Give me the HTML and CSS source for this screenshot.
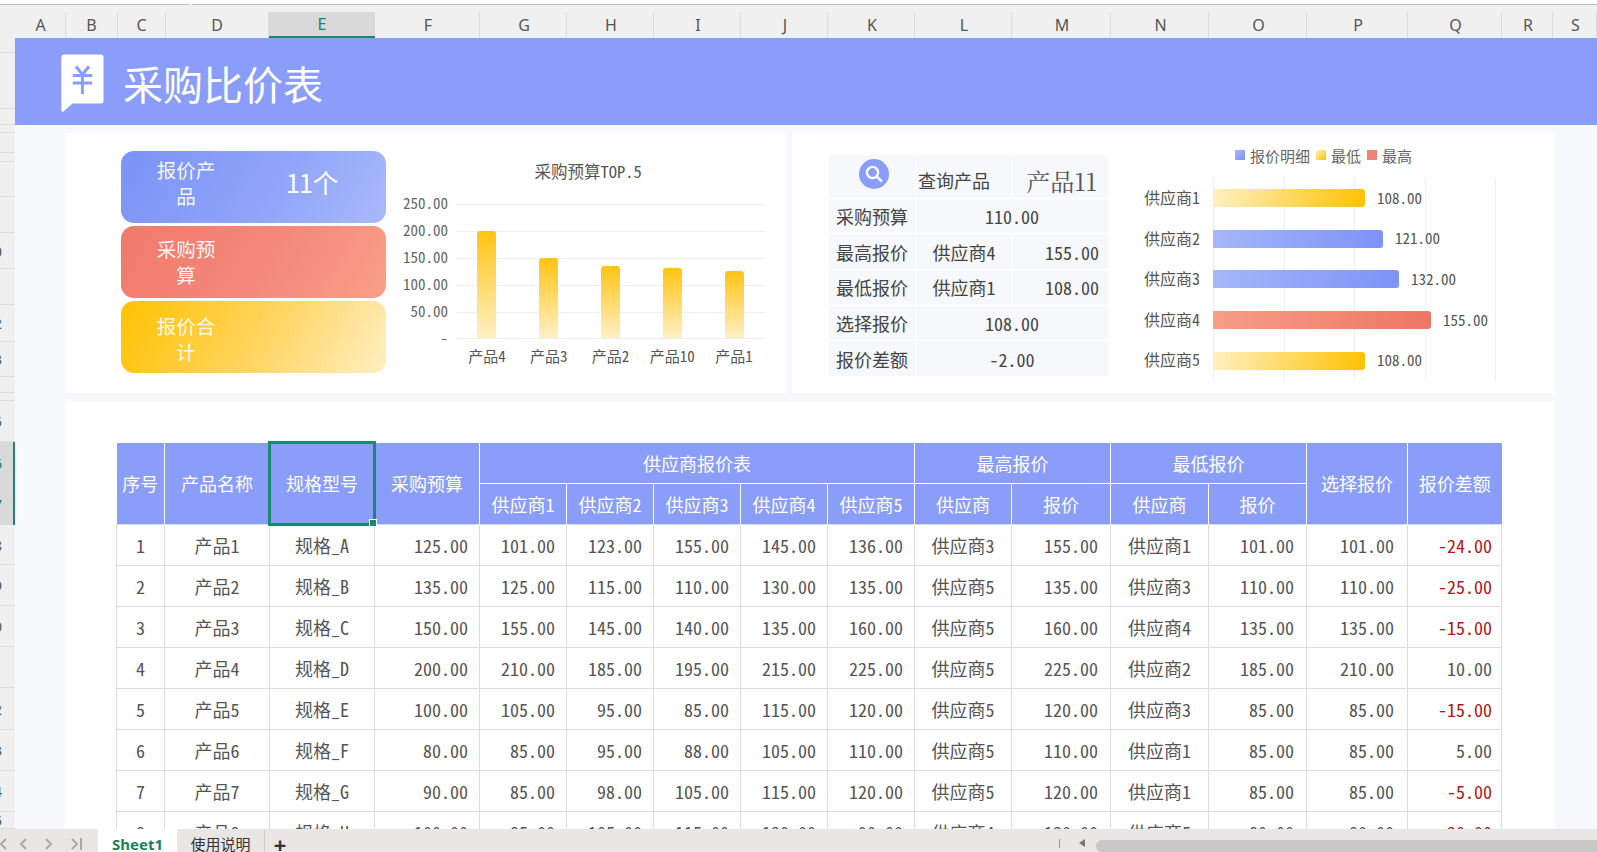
FILE: index.html
```html
<!DOCTYPE html>
<html lang="zh-CN">
<head>
<meta charset="utf-8">
<title>采购比价表</title>
<link rel="stylesheet" href="styles.css">
</head>
<body>
<div class="app">
  <div class="topstrip"></div>
  <div class="colhead">
    <span class="ch"></span><span class="ch">A</span><span class="ch">B</span><span class="ch">C</span><span class="ch">D</span><span class="ch active">E</span><span class="ch">F</span><span class="ch">G</span><span class="ch">H</span><span class="ch">I</span><span class="ch">J</span><span class="ch">K</span><span class="ch">L</span><span class="ch">M</span><span class="ch">N</span><span class="ch">O</span><span class="ch">P</span><span class="ch">Q</span><span class="ch">R</span><span class="ch">S</span>
  </div>
  <div class="body">
    <div class="rowhead">
      <div class="rh" style="height:15px"></div>
      <div class="rh" style="height:56px"></div>
      <div class="rh" style="height:16px"></div>
      <div class="rh" style="height:8px"></div>
      <div class="rh" style="height:20px"></div>
      <div class="rh" style="height:9px"></div>
      <div class="rh" style="height:35px"></div>
      <div class="rh" style="height:36px"></div>
      <div class="rh" style="height:36px"><span>0</span></div>
      <div class="rh" style="height:36px"></div>
      <div class="rh" style="height:37px"><span>2</span></div>
      <div class="rh" style="height:35px"><span>3</span></div>
      <div class="rh" style="height:16px"></div>
      <div class="rh" style="height:8px"></div>
      <div class="rh" style="height:41px"><span>5</span></div>
      <div class="rh sel" style="height:41px"><span>6</span></div>
      <div class="rh sel" style="height:42px"><span>7</span></div>
      <div class="rh" style="height:40px"><span>8</span></div>
      <div class="rh" style="height:41px"><span>9</span></div>
      <div class="rh" style="height:41px"><span>0</span></div>
      <div class="rh" style="height:41px"></div>
      <div class="rh" style="height:42px"><span>2</span></div>
      <div class="rh" style="height:41px"><span>3</span></div>
      <div class="rh" style="height:41px"><span>4</span></div>
      <div class="rh" style="height:17px"><span>5</span></div>
    </div>
    <main class="sheet">
      <header class="banner">
        <svg class="logo" viewBox="0 0 43 58" width="43" height="58" aria-hidden="true">
          <path class="logo-bubble" d="M3 0.5H40a2.5 2.5 0 0 1 2.5 2.5V47a2.5 2.5 0 0 1-2.5 2.5H11.5L2.5 57.4Q0.3 58.4 0.3 56V3A2.7 2.7 0 0 1 3 0.5Z"/>
          <path class="logo-yen" d="M15 12.5L21.4 20.5L28 12.5M11.8 21.5H31.2M11.8 29H31.2M21.4 20.5V40"/>
        </svg>
        <h1 class="title">采购比价表</h1>
      </header>
      <div class="panels">
        <section class="panel panel-left">
          <div class="kpis">
            <div class="kpi kpi-blue"><div class="kpi-label">报价产品</div><div class="kpi-value">11个</div></div>
            <div class="kpi kpi-red"><div class="kpi-label">采购预算</div><div class="kpi-value"></div></div>
            <div class="kpi kpi-yellow"><div class="kpi-label">报价合计</div><div class="kpi-value"></div></div>
          </div>
          <div class="budget">
            <div class="budget-title">采购预算TOP.5</div>
            <div class="budget-chart">
              <div class="axis">
                <span>250.00</span><span>200.00</span><span>150.00</span><span>100.00</span><span>50.00</span><span>-</span>
              </div>
              <div class="budget-main">
                <div class="plot">
                  <div class="slot"><i class="vbar" style="height:80%"></i></div>
                  <div class="slot"><i class="vbar" style="height:60%"></i></div>
                  <div class="slot"><i class="vbar" style="height:54%"></i></div>
                  <div class="slot"><i class="vbar" style="height:52%"></i></div>
                  <div class="slot"><i class="vbar" style="height:50%"></i></div>
                </div>
                <div class="xlabels"><span>产品4</span><span>产品3</span><span>产品2</span><span>产品10</span><span>产品1</span></div>
              </div>
            </div>
          </div>
        </section>
        <section class="panel panel-right">
          <table class="query">
            <tbody>
              <tr class="q-first">
                <td class="q-icon">
                  <svg viewBox="0 0 30 30" width="30" height="30" aria-hidden="true">
                    <circle class="icon-disc" cx="15" cy="15" r="15"/>
                    <circle class="icon-lens" cx="13.5" cy="13.5" r="5.6"/>
                    <path class="icon-handle" d="M18 18L23 22.5"/>
                  </svg>
                </td>
                <td class="q-bottom q-name">查询产品</td>
                <td class="q-bottom q-product">产品11</td>
              </tr>
              <tr><td>采购预算</td><td colspan="2" class="n">110.00</td></tr>
              <tr><td>最高报价</td><td>供应商4</td><td class="n r">155.00</td></tr>
              <tr><td>最低报价</td><td>供应商1</td><td class="n r">108.00</td></tr>
              <tr><td>选择报价</td><td colspan="2" class="n">108.00</td></tr>
              <tr><td>报价差额</td><td colspan="2" class="n">-2.00</td></tr>
            </tbody>
          </table>
          <div class="supplier">
            <div class="legend">
              <i class="sq sq-blue"></i><span>报价明细</span>
              <i class="sq sq-yellow"></i><span>最低</span>
              <i class="sq sq-red"></i><span>最高</span>
            </div>
            <div class="supplier-chart">
              <div class="cats"><span>供应商1</span><span>供应商2</span><span>供应商3</span><span>供应商4</span><span>供应商5</span></div>
              <div class="hplot">
                <div class="hrow"><i class="hbar hb-yellow" style="width:152px"></i><span>108.00</span></div>
                <div class="hrow"><i class="hbar hb-blue" style="width:170px"></i><span>121.00</span></div>
                <div class="hrow"><i class="hbar hb-blue" style="width:186px"></i><span>132.00</span></div>
                <div class="hrow"><i class="hbar hb-red" style="width:218px"></i><span>155.00</span></div>
                <div class="hrow"><i class="hbar hb-yellow" style="width:152px"></i><span>108.00</span></div>
              </div>
            </div>
          </div>
        </section>
      </div>
      <section class="panel panel-table">
        <table class="data">
          <colgroup>
            <col class="w48"><col class="w105"><col class="w105"><col class="w105"><col class="w87"><col class="w87"><col class="w87"><col class="w87"><col class="w87"><col class="w97"><col class="w99"><col class="w98"><col class="w98"><col class="w101"><col class="w94">
          </colgroup>
          <thead>
            <tr>
              <th rowspan="2">序号</th><th rowspan="2">产品名称</th>
              <th rowspan="2" class="selected">规格型号<i class="sel-box"></i><i class="sel-handle"></i></th>
              <th rowspan="2">采购预算</th><th colspan="5">供应商报价表</th><th colspan="2">最高报价</th><th colspan="2">最低报价</th><th rowspan="2">选择报价</th><th rowspan="2">报价差额</th>
            </tr>
            <tr><th>供应商1</th><th>供应商2</th><th>供应商3</th><th>供应商4</th><th>供应商5</th><th>供应商</th><th>报价</th><th>供应商</th><th>报价</th></tr>
          </thead>
          <tbody>
            <tr><td>1</td><td>产品1</td><td>规格_A</td><td class="n r">125.00</td><td class="n r">101.00</td><td class="n r">123.00</td><td class="n r">155.00</td><td class="n r">145.00</td><td class="n r">136.00</td><td>供应商3</td><td class="n r">155.00</td><td>供应商1</td><td class="n r">101.00</td><td class="n r">101.00</td><td class="n r neg">-24.00</td></tr>
            <tr><td>2</td><td>产品2</td><td>规格_B</td><td class="n r">135.00</td><td class="n r">125.00</td><td class="n r">115.00</td><td class="n r">110.00</td><td class="n r">130.00</td><td class="n r">135.00</td><td>供应商5</td><td class="n r">135.00</td><td>供应商3</td><td class="n r">110.00</td><td class="n r">110.00</td><td class="n r neg">-25.00</td></tr>
            <tr><td>3</td><td>产品3</td><td>规格_C</td><td class="n r">150.00</td><td class="n r">155.00</td><td class="n r">145.00</td><td class="n r">140.00</td><td class="n r">135.00</td><td class="n r">160.00</td><td>供应商5</td><td class="n r">160.00</td><td>供应商4</td><td class="n r">135.00</td><td class="n r">135.00</td><td class="n r neg">-15.00</td></tr>
            <tr><td>4</td><td>产品4</td><td>规格_D</td><td class="n r">200.00</td><td class="n r">210.00</td><td class="n r">185.00</td><td class="n r">195.00</td><td class="n r">215.00</td><td class="n r">225.00</td><td>供应商5</td><td class="n r">225.00</td><td>供应商2</td><td class="n r">185.00</td><td class="n r">210.00</td><td class="n r">10.00</td></tr>
            <tr><td>5</td><td>产品5</td><td>规格_E</td><td class="n r">100.00</td><td class="n r">105.00</td><td class="n r">95.00</td><td class="n r">85.00</td><td class="n r">115.00</td><td class="n r">120.00</td><td>供应商5</td><td class="n r">120.00</td><td>供应商3</td><td class="n r">85.00</td><td class="n r">85.00</td><td class="n r neg">-15.00</td></tr>
            <tr><td>6</td><td>产品6</td><td>规格_F</td><td class="n r">80.00</td><td class="n r">85.00</td><td class="n r">95.00</td><td class="n r">88.00</td><td class="n r">105.00</td><td class="n r">110.00</td><td>供应商5</td><td class="n r">110.00</td><td>供应商1</td><td class="n r">85.00</td><td class="n r">85.00</td><td class="n r">5.00</td></tr>
            <tr><td>7</td><td>产品7</td><td>规格_G</td><td class="n r">90.00</td><td class="n r">85.00</td><td class="n r">98.00</td><td class="n r">105.00</td><td class="n r">115.00</td><td class="n r">120.00</td><td>供应商5</td><td class="n r">120.00</td><td>供应商1</td><td class="n r">85.00</td><td class="n r">85.00</td><td class="n r neg">-5.00</td></tr>
            <tr><td>8</td><td>产品8</td><td>规格_H</td><td class="n r">100.00</td><td class="n r">85.00</td><td class="n r">105.00</td><td class="n r">115.00</td><td class="n r">130.00</td><td class="n r">90.00</td><td>供应商4</td><td class="n r">130.00</td><td>供应商5</td><td class="n r">80.00</td><td class="n r">80.00</td><td class="n r neg">-20.00</td></tr>
          </tbody>
        </table>
      </section>
    </main>
  </div>
  <footer class="tabbar">
    <div class="navs">
      <svg viewBox="0 0 90 16" width="90" height="16" aria-hidden="true">
        <path d="M6 3L1 8L6 13M26 3L21 8L26 13M46 3L51 8L46 13M72 3L77 8L72 13M81 2V14"/>
      </svg>
    </div>
    <div class="tab tab-active">Sheet1</div>
    <div class="tab tab-plain">使用说明</div>
    <div class="tab-add">+</div>
    <div class="scroll">
      <i class="scroll-sep"></i>
      <i class="scroll-arrow"></i>
      <i class="scroll-thumb"></i>
    </div>
  </footer>
</div>
</body>
</html>
```

FILE: styles.css
```css
* { box-sizing: border-box; }
html, body { margin: 0; height: 100%; overflow: hidden; }
body {
  font-family: "Noto Sans Mono CJK SC", "Noto Sans CJK SC", "Liberation Mono", monospace;
  color: #555;
  background: #f0f0f0;
}
.app { width: 1597px; height: 852px; display: flex; flex-direction: column; position: relative; overflow: hidden; }

/* top chrome */
.topstrip { height: 12px; flex: none; background: #f0f0f0; position: relative; }
.topstrip::before { content: ""; display: block; height: 4px; background: #fff; border-bottom: 1px solid #bdbdbd; }
.topstrip::after {
  content: ""; position: absolute; left: 187px; top: -3px; width: 7px; height: 7px;
  background: #fff; transform: rotate(45deg); border: 0;
}
.colhead {
  height: 26px; flex: none; display: grid; background: #f0f0f0;
  grid-template-rows: 26px;
  grid-template-columns: 16px 50px 52px 48px 103px 106px 105px 87px 87px 87px 87px 87px 97px 99px 98px 98px 101px 94px 51px 44px;
}
.ch {
  display: flex; align-items: center; justify-content: center;
  font: 16px/20px "Noto Sans", sans-serif; color: #555;
  border-right: 1px solid #dcdcdc;
}
.ch:first-child { border-right: 0; }
.ch:nth-child(n+7) { padding-left: 2px; }
.ch.active { background: #d9d9d9; color: #1a7f64; border-bottom: 2px solid #1a8a6c; border-right: 0; }

/* body */
.body { flex: 1; min-height: 0; display: flex; }
.rowhead { width: 15px; flex: none; background: #f0f0f0; overflow: hidden; }
.rh {
  display: flex; justify-content: flex-end; align-items: center; padding-right: 13px;
  border-bottom: 1px solid #dcdcdc; font: 15px "Noto Sans", sans-serif; color: #555;
}
.rh span { flex: none; }
.rh.sel { background: #d9d9d9; border-right: 2px solid #1a8a6c; padding-right: 11px; color: #1a7f64; border-bottom: 0; }

.sheet { flex: 1; min-width: 0; background: #f7f9fd; overflow: hidden; }
.banner { height: 87px; background: #8a9df9; display: flex; align-items: center; padding-left: 46px; gap: 19px; }
.logo { display: block; margin-top: 3px; }
.logo-bubble { fill: #fff; }
.logo-yen { fill: none; stroke: #8a9df9; stroke-width: 3; }
.title { margin: 2px 0 0; font-size: 40px; font-weight: 400; color: #fff; line-height: 48px; }

.panels { display: flex; gap: 6px; margin: 8px 42px 0 50px; height: 260px; }
.panel { background: #fff; }
.panel-left { width: 721px; display: flex; padding: 18px 0 0 56px; }
.panel-right { flex: 1; display: flex; padding: 12px 0 0 36px; }

/* KPIs */
.kpis { width: 265px; flex: none; display: flex; flex-direction: column; gap: 3px; }
.kpi { height: 72px; border-radius: 13px; display: flex; align-items: center; color: #fff; }
.kpi-blue { background: linear-gradient(120deg, #7b93f6, #8fa4f9 55%, #a9b9fb); }
.kpi-red { background: linear-gradient(120deg, #f07a6b, #f4897a 55%, #f99f87); }
.kpi-yellow { background: linear-gradient(120deg, #ffc200, #ffd564 55%, #fff0c4); }
.kpi-label { width: 66px; margin-left: 32px; font-size: 19.5px; line-height: 26.5px; text-align: center; color: #fff; opacity: .92; }
.kpi-blue .kpi-label { margin-top: -8px; }
.kpi-yellow .kpi-label { margin-top: 4px; }
.kpi-value { flex: 1; padding-left: 20px; margin-top: -10px; text-align: center; font-size: 26px; line-height: 30px; }

/* budget chart */
.budget { width: 370px; flex: none; margin-left: 17px; padding-top: 10px; }
.budget-title { height: 20px; line-height: 20px; text-align: center; font-size: 16.5px; margin-bottom: 23px; }
.budget-chart { display: flex; gap: 10px; }
.axis {
  width: 43px; flex: none; margin-top: -15px; align-self: flex-start; display: grid; grid-auto-rows: 27px; align-items: center;
  text-align: right; font-size: 15px; color: #666; white-space: nowrap;
}
.budget-main { width: 309px; flex: none; }
.plot {
  height: 135px; display: flex; align-items: flex-end;
  background: repeating-linear-gradient(to bottom, #efefef 0 1px, transparent 1px 27px);
  border-bottom: 1px solid #efefef;
}
.slot { flex: 1; height: 100%; display: flex; justify-content: center; align-items: flex-end; }
.vbar { display: block; width: 19px; border-radius: 3px 3px 0 0; background: linear-gradient(to bottom, #ffc412, #fff0c6); }
.xlabels { display: flex; margin-top: 7px; }
.xlabels span { flex: 1; text-align: center; font-size: 15px; line-height: 20px; }

/* query table */
.query { width: 281px; height: 223px; margin-top: 9px; flex: none; border-collapse: collapse; table-layout: fixed; background: #f6f8fc; color: #444; }
.query td { border: 1px solid #fff; padding: 0; text-align: center; font-size: 18px; height: 35px; line-height: 24px; }
.query td:first-child { width: 87px; }
.query td:nth-child(2) { width: 97px; }
.q-first td { height: 43px; }
.query td.q-bottom { vertical-align: bottom; padding-bottom: 6px; }
.query td.q-name { text-align: left; padding-left: 2px; }
.query td.q-product { font-family: "Noto Serif CJK SC", "Liberation Serif", "Noto Sans CJK SC", serif; font-size: 24px; font-weight: 400; color: #555; padding-left: 2px; padding-bottom: 5px; }
.query td.q-icon { padding-left: 4px; }
.q-icon svg { display: block; margin: 0 auto 5px; }
.icon-disc { fill: #8a9df9; }
.icon-lens { fill: none; stroke: #fff; stroke-width: 2.4; }
.icon-handle { fill: none; stroke: #fff; stroke-width: 2.6; }

/* supplier chart */
.supplier { margin-left: 36px; flex: none; }
.legend { height: 20px; margin: 0 0 13px 90px; display: flex; align-items: center; font-size: 15px; color: #666; }
.legend .sq { width: 10px; height: 10px; margin-right: 5px; }
.legend span { margin-right: 6px; }
.sq-blue { background: linear-gradient(135deg, #a6b7fb, #7b93f5); }
.sq-yellow { background: linear-gradient(135deg, #fff0c4, #ffc200); }
.sq-red { background: #f08474; }
.supplier-chart { display: flex; gap: 11px; }
.cats { width: 57px; flex: none; display: flex; flex-direction: column; margin-left: -1px; margin-right: 1px; }
.cats span { height: 40.6px; line-height: 38.4px; font-size: 16px; white-space: nowrap; }
.hplot {
  width: 284px; height: 203px;
  background: repeating-linear-gradient(to right, #efefef 0 1px, transparent 1px 70.6px);
}
.hrow { height: 40.6px; display: flex; align-items: center; gap: 12px; font-size: 15px; color: #555; white-space: nowrap; }
.hrow span { margin-top: -2px; }
.hbar { display: block; height: 18px; border-radius: 0 3px 3px 0; }
.hb-yellow { background: linear-gradient(100deg, #fff0c4, #ffc200); }
.hb-blue { background: linear-gradient(100deg, #a6b7fb, #7b93f5); }
.hb-red { background: linear-gradient(100deg, #f89e87, #ee7565); }

/* data table */
.panel-table { margin: 8px 42px 0 50px; padding: 42px 0 0 51px; height: 480px; overflow: hidden; }
.data { width: 1385px; border-collapse: collapse; table-layout: fixed; }
.w48 { width: 48px; } .w105 { width: 105px; } .w87 { width: 87px; } .w97 { width: 97px; } .w99 { width: 99px; }
.w98 { width: 98px; } .w101 { width: 101px; } .w94 { width: 94px; }
.data th {
  background: #8a9df9; color: #fff; font-weight: 400; font-size: 18px; height: 40.5px; padding: 0;
  border: 1px solid #fff; border-top: 0; text-align: center; line-height: 24px;
}
.data thead tr:first-child th:first-child { border-left: 0; }
.data th:last-child { border-right: 0; }
.data thead tr:last-child th { border-bottom: 0; }
.data th[rowspan] { border-bottom: 0; }
.data td { height: 41px; padding: 0; border: 1px solid #dcdcdc; text-align: center; font-size: 18px; line-height: 24px; color: #555; white-space: nowrap; overflow: hidden; }
.data td.r { text-align: right; padding-right: 11px; }
.query td.r { text-align: right; padding-right: 9px; }
.data td.r:nth-child(11), .data td.r:nth-child(13) { padding-right: 12px; }
.data td.r:nth-child(14) { padding-right: 13px; }
.data td.r:nth-child(15) { padding-right: 9px; }
.data td.neg { color: #b01616; }
.selected { position: relative; }
.sel-box { position: absolute; left: -2px; top: -2px; right: -2px; bottom: -2px; border: 3px solid #1a8a6c; }
.sel-handle { position: absolute; right: -3px; bottom: -3px; width: 6px; height: 6px; background: #1a8a6c; border: 1px solid #fff; box-sizing: content-box; }

/* tabs */
.tabbar {
  height: 23px; flex: none; background: #e9e6e6; display: flex; align-items: flex-start; position: relative; overflow: hidden;
}
.navs { width: 98px; flex: none; padding-top: 7px; }
.navs svg { display: block; }
.navs path { fill: none; stroke: #a8a8a8; stroke-width: 2; }
.tab { height: 23px; line-height: 30px; font-size: 15px; text-align: center; }
.tab-active { width: 79px; background: #fff; color: #1a7f5c; font-family: "Noto Sans", sans-serif; font-weight: 700; }
.tab-plain { width: 88px; color: #333; border-right: 1px solid #ccc; }
.tab-add { width: 30px; text-align: center; font: 700 22px/30px "Noto Sans", sans-serif; color: #333; }
.scroll { position: absolute; left: 1059px; right: 0; top: 0; height: 23px; display: flex; align-items: center; }
.scroll-sep { width: 1px; height: 9px; margin-top: 5px; background: #999; }
.scroll-arrow { margin: 5px 0 0 19px; border: 4px solid transparent; border-right: 6px solid #777; border-left: 0; }
.scroll-thumb { flex: 1; height: 12px; margin: 11px 0 0 11px; background: #c9c8c8; border-radius: 6px 0 0 6px; }
```
